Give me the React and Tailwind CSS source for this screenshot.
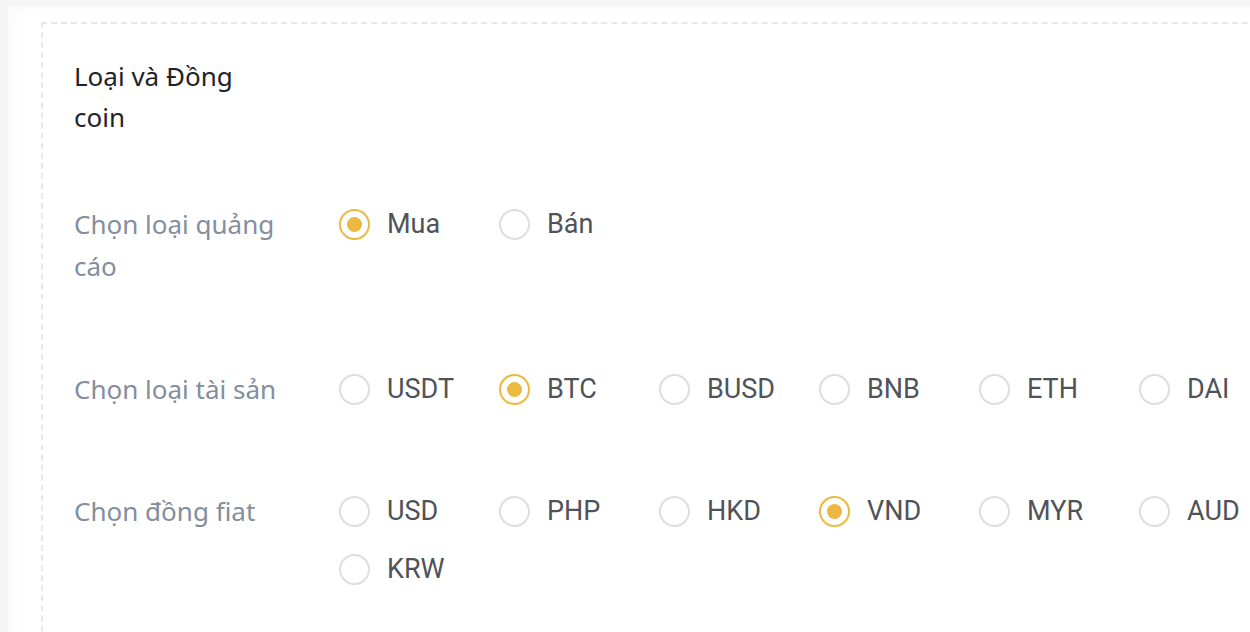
import React from "react";

const Radio = ({ label, checked }) => (
  <div className="flex h-[42px] w-[160px] shrink-0 items-center">
    <span
      className={
        "mr-[17px] flex h-[31px] w-[31px] shrink-0 items-center justify-center rounded-full border-2 " +
        (checked ? "border-[#ecb940]" : "border-[#dedede]")
      }
    >
      {checked && <span className="h-[15px] w-[15px] rounded-full bg-[#ecb940]" />}
    </span>
    <span
      className="text-[27px] leading-[42px] text-[#4f5359]"
      style={{ fontFamily: "Roboto, 'Liberation Sans', sans-serif" }}
    >
      {label}
    </span>
  </div>
);

const Row = ({ label, items, selected, className }) => (
  <div className={"flex " + className}>
    <div className="w-[265px] shrink-0 pr-[20px] text-[26px] leading-[42px] text-[#848e9c]">
      {label}
    </div>
    <div className="flex w-[980px] shrink-0 flex-wrap gap-y-[16px]">
      {items.map((it) => (
        <Radio key={it} label={it} checked={it === selected} />
      ))}
    </div>
  </div>
);

export default function App() {
  return (
    <div
      className="h-[632px] w-full overflow-hidden bg-[#f5f5f5] pl-[8px] pt-[6px]"
      style={{ fontFamily: "'Noto Sans', 'Open Sans', sans-serif" }}
    >
      <div className="h-[700px] w-[1400px] bg-white pl-[33px] pt-[16px] shadow-[inset_4px_4px_14px_rgba(0,0,0,0.025)]">
        <div className="h-[700px] border-l-2 border-t-2 border-dashed border-[#e6e8ea] pl-[31px] pt-[32px]">
          <div className="w-[200px] text-[26px] leading-[41px] text-[#1e2329]">
            Loại và Đồng coin
          </div>
          <Row
            className="mt-[65px]"
            label="Chọn loại quảng cáo"
            items={["Mua", "Bán"]}
            selected="Mua"
          />
          <Row
            className="mt-[81px]"
            label="Chọn loại tài sản"
            items={["USDT", "BTC", "BUSD", "BNB", "ETH", "DAI"]}
            selected="BTC"
          />
          <Row
            className="mt-[80px]"
            label="Chọn đồng fiat"
            items={["USD", "PHP", "HKD", "VND", "MYR", "AUD", "KRW"]}
            selected="VND"
          />
        </div>
      </div>
    </div>
  );
}
